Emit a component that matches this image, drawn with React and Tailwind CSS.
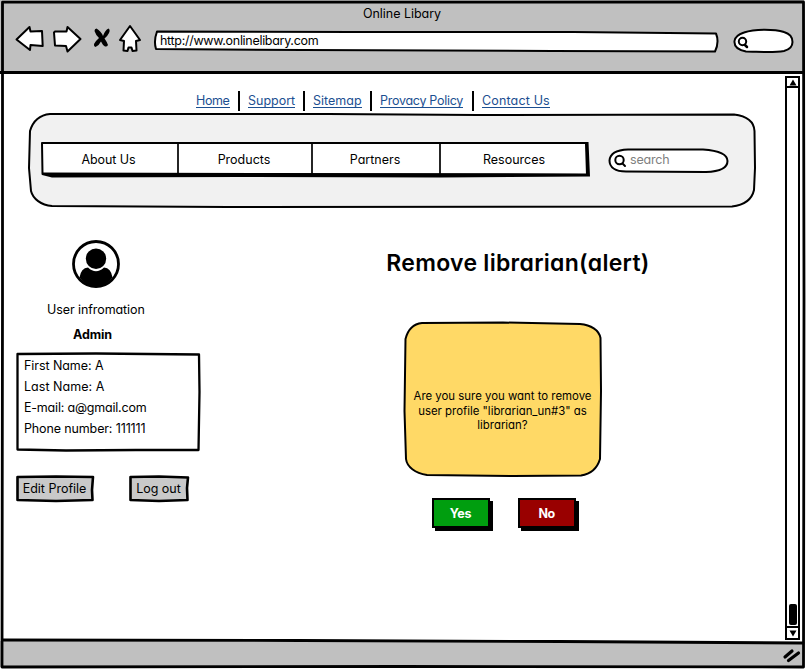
import React from "react";

/* Hand-drawn outline stretched behind the content of its box. */
function Sketch({ w, h, children }) {
  return (
    <svg
      className="pointer-events-none absolute top-0 left-0 overflow-visible"
      width={w}
      height={h}
      viewBox={`0 0 ${w} ${h}`}
      fill="none"
      stroke="#000"
      strokeWidth="2"
      strokeLinejoin="round"
      strokeLinecap="round"
      aria-hidden="true"
    >
      {children}
    </svg>
  );
}

function Toolbar() {
  return (
    <header className="mr-[2px] h-[74px] border-b-[3px] border-black bg-[#c0c0c0]">
      <div className="h-[24px] pt-[6px] pl-[363px] leading-[16px] tracking-[-0.04px]">
        Online Libary
      </div>
      <div className="flex h-[34px]">
        <svg className="ml-[14px] h-[30px] w-[130px] shrink-0" viewBox="14 22 130 30" fill="#fff" stroke="#000" strokeWidth="2" strokeLinejoin="round" strokeLinecap="round">
          <path d="M16.5 37.5 L29.5 25 L30.5 29.5 L42 29 L42.7 44 L30.5 43 L30 48 Z" />
          <path d="M54 30.5 L55 29.500 L66.5 29.5 L67.500 25 L80.5 37 L67.5 49.5 L66 44 L55 43.500 Z" />
          <path d="M96.500 26.500 Q101 29 103 34 Q105 28 108.500 26.500 Q110.500 28 109 31 Q107 35 104.500 36.500 Q107 40 108 43 Q107 45 105 44.500 Q102.500 43 101 39.500 Q99 43.500 95.500 45 Q93.500 44.500 94 42 Q96 38.500 99 36 Q95.500 32.500 94.500 29 Q94.500 26.500 96.500 26.500 Z" fill="#000" stroke="none" />
          <path d="M130 24 L140 38 L136 39 L136.5 48.5 L132.500 49 L131.5 45.500 L128.500 45.500 L127.5 49 L123.5 48.5 L124 39 L120 38 Z" />
        </svg>
        <div className="relative mt-[6px] ml-[9px] h-[23px] w-[567px] shrink-0">
          <Sketch w={567} h={23}>
            <path d="M4 1.5 L200 2 L420 2 L563 3.5 Q566.5 12 562 21.500 L400 21 L150 20 L3 19 Q0.5 11 4 1.5 Z" fill="#fff" />
          </Sketch>
          <span className="relative block pt-[3px] pl-[7px] leading-[16px] tracking-[-0.3px]">
            http://www.onlinelibary.com
          </span>
        </div>
        <svg className="mt-[3px] ml-[13px] h-[28px] w-[62px] shrink-0" viewBox="733 27 62 28" fill="none" stroke="#000" strokeWidth="2" strokeLinejoin="round" strokeLinecap="round">
          <path d="M744 32.5 C755 28.5 775 29 784 32 C791 34 792.500 38 792.500 42 C792.500 47 790 49.500 784 51 C772 53 757 51.500 746 51.500 C738 50 734 46 734.500 41 C735 37 738 34.500 744 32.500 Z" fill="#fff" />
          <circle cx="742.5" cy="41.500" r="3.7" />
          <path d="M745 45 L747 47" strokeWidth="2.5" />
        </svg>
      </div>
    </header>
  );
}

function Divider() {
  return <span className="mr-2 h-[20px] w-[2px] bg-black" />;
}

function Link({ className, children }) {
  return (
    <span className={className}>
      <a className="block h-[15px] w-fit border-b border-[#1c4f91] leading-[16px] text-[#1c4f91]">{children}</a>
    </span>
  );
}

function TopLinks() {
  return (
    <nav className="mt-[17px] ml-[192px] flex h-[22px] whitespace-nowrap">
      <Link className="w-[42px] pt-[2px] tracking-[-0.37px]">Home</Link>
      <Divider />
      <Link className="w-[55px] pt-[2px]">Support</Link>
      <Divider />
      <Link className="w-[57px] pt-[2px]">Sitemap</Link>
      <Divider />
      <Link className="w-[92px] pt-[2px] tracking-[-0.28px]">Provacy Policy</Link>
      <Divider />
      <Link className="pt-[2px] tracking-[0.16px]">Contact Us</Link>
    </nav>
  );
}

function MenuPanel() {
  return (
    <section className="relative ml-[24px] flex h-[95px] w-[728px]">
      <Sketch w={728} h={95}>
        <path
          d="M22 1 L300 1 L450 2 L706 1.5 C718 3 726 8 726.5 18 L727 55 L726 77 C724 86 717 92 704 93.5 L200 94 L24 93 C13 92 5 86 3 78 L1 55 L2 18 C5 8 11 2 22 1 Z"
          fill="#f1f1f1"
        />
      </Sketch>
      <div className="relative mt-[28px] ml-[12px] h-[38px] w-[551px]">
        <Sketch w={551} h={38}>
          <path d="M2 2 L546 2 L547 34 L2.500 33 Z" fill="#fff" />
          <path d="M2 31.500 L547 32.500 L545.500 1 L548.500 1 L550 35.500 L400 36.500 L200 36 L12 36.500 L2 34 Z" fill="#000" stroke="none" />
          <path d="M138 2 V33 M272 2 V33 M400 2 V33" strokeWidth="1.7" />
        </Sketch>
        <div className="relative flex h-[36px] items-center text-center leading-[16px]">
          <span className="w-[138px] pt-px pr-[1px] tracking-[-0.07px]">About Us</span>
          <span className="w-[134px] pt-px pr-[2px]">Products</span>
          <span className="w-[128px] pt-px pr-[2px]">Partners</span>
          <span className="w-[148px] pt-px">Resources</span>
        </div>
      </div>
      <div className="relative mt-[35px] ml-[17px] h-[26px] w-[121px]">
        <Sketch w={121} h={26}>
          <path d="M20 1.5 L95 1.5 C110 2.500 119.500 6 119.500 13 C119.500 20 112 23.500 98 24 L18 23.5 C7 23.500 1.500 19 1.500 12.500 C2 6 8 2 20 1.5 Z" fill="#fff" />
          <circle cx="11.5" cy="12" r="4.200" />
          <path d="M14.5 15.5 L17 18" />
        </Sketch>
        <span className="relative block pt-[4px] pl-[22px] leading-[16px] tracking-[-0.18px] text-[#808080]">
          search
        </span>
      </div>
    </section>
  );
}

function Profile() {
  return (
    <aside className="w-[200px] shrink-0">
      <svg className="mt-[32px] ml-[68px] h-[48px] w-[48px]" viewBox="0 0 48 48">
        <circle cx="24" cy="24" r="22.5" fill="#fff" stroke="#000" strokeWidth="2.8" />
        <circle cx="24" cy="18.8" r="10.2" />
        <path d="M7.5 37.5 Q9 28 16 27.5 Q24 35 32 27.5 Q39 28 40.5 37.5 Q34 46.5 24 46.5 Q14 46.5 7.5 37.5 Z" />
      </svg>
      <p className="mt-[14px] ml-[43px] leading-[16px] tracking-[-0.08px]">User infromation</p>
      <p className="mt-[9px] ml-[69px] leading-[16px] font-bold tracking-[-0.1px]">Admin</p>
      <div className="relative mt-[9px] ml-[12px] h-[99px] w-[185px]">
        <Sketch w={185} h={99}>
          <path d="M1.5 2 L80 1.5 L183 2.5 L183.5 40 L182.5 98 L120 98 L50 98.5 L1.5 97.5 Z" strokeWidth="2.300" />
        </Sketch>
        <div className="relative pt-[3px] pl-[8px] leading-[21px]">
          <p className="tracking-[-0.07px]">First Name: A</p>
          <p className="tracking-[0.03px]">Last Name: A</p>
          <p className="tracking-[-0.2px]">E-mail: a@gmail.com</p>
          <p className="tracking-[-0.13px]">Phone number: 111111</p>
        </div>
      </div>
      <div className="mt-[24px] ml-[12px] flex">
        <button className="relative h-[27px] w-[78px]">
          <Sketch w={78} h={27}>
            <path d="M1.500 2 L40 1.5 L77 2 L76 15 L76.5 25 L40 26 L1.500 25 Z" fill="#c9c9c9" strokeWidth="2.6" />
          </Sketch>
          <span className="relative block pr-[1px] leading-[16px]">Edit Profile</span>
        </button>
        <button className="relative ml-[35px] h-[27px] w-[60px]">
          <Sketch w={60} h={27}>
            <path d="M1.500 2 L30 1.5 L59 2.5 L58 13 L58.5 25 L30 26 L1.500 25 Z" fill="#c9c9c9" strokeWidth="2.6" />
          </Sketch>
          <span className="relative block pr-[1px] leading-[16px]">Log out</span>
        </button>
      </div>
    </aside>
  );
}

function Alert() {
  return (
    <section className="flex w-[628px] shrink-0 flex-col items-center">
      <h1 className="mt-[40px] text-[23px] leading-[30px] font-semibold tracking-[0.28px]">Remove librarian(alert)</h1>
      <div className="relative mt-[43px] mr-[31px] h-[157px] w-[200px]">
        <Sketch w={200} h={157}>
          <path
            d="M19 2 L100 1.5 L177 3 C188 4 196 9 197.5 17 L198 70 L197 138 C194 148 188 153 178 154.5 L110 155 L24 154 C12 152 4 146 3 138 L1.500 90 L2.500 18 C5 8 10 3 19 2 Z"
            fill="#ffd966"
          />
        </Sketch>
        <p className="relative pt-[68px] text-center text-[11.4px] leading-[14.5px] whitespace-nowrap">
          Are you sure you want to remove
          <br />
          user profile "librarian_un#3" as
          <br />
          librarian?
        </p>
      </div>
      <div className="mt-[20px] mr-[29px] flex gap-[28px] font-bold text-white">
        <button className="h-[30px] w-[58px] border-2 border-black bg-[#009e0f] pt-px leading-[16px] tracking-[-0.2px] shadow-[3px_3px_0_0_#000]">
          Yes
        </button>
        <button className="h-[30px] w-[58px] border-2 border-black bg-[#990000] pt-px leading-[16px] tracking-[-0.5px] shadow-[3px_3px_0_0_#000]">
          No
        </button>
      </div>
    </section>
  );
}

function Scrollbar() {
  return (
    <div className="mt-[2px] ml-px flex h-[564px] w-[15px] flex-col items-center border-2 border-black">
      <div className="flex h-[10px] w-full items-center justify-center border-b-2 border-black">
        <svg width="8" height="7" viewBox="0 0 8 7"><path d="M4 0.5 L7.5 6.5 L0.5 6.5 Z" /></svg>
      </div>
      <div className="mt-auto mb-[1px] h-[21px] w-[8px] rounded-[2px] bg-black" />
      <div className="flex h-[12px] w-full items-center justify-center border-t-2 border-black">
        <svg width="8" height="7" viewBox="0 0 8 7"><path d="M0.5 0.5 L7.5 0.5 L4 6.5 Z" /></svg>
      </div>
    </div>
  );
}

export default function App() {
  return (
    <div className="h-[669px] w-[806px] bg-white font-['Inter','Liberation_Sans',sans-serif] text-[12.5px] text-black [font-feature-settings:'cv11']">
      <div className="relative flex h-[669px] w-[806px] flex-col overflow-hidden">
        <Toolbar />
        <main className="flex h-[567px] shrink-0 pl-[4px]">
          <div className="w-[780px] shrink-0">
            <TopLinks />
            <MenuPanel />
            <div className="flex">
              <Profile />
              <Alert />
            </div>
          </div>
          <Scrollbar />
        </main>
        <footer className="relative mr-[2px] h-[26px] bg-[#c0c0c0]">
          <Sketch w={804} h={26}>
            <path d="M300 0 L560 0.5 L803 2 L803 0 Z" fill="#fff" stroke="none" />
            <path d="M3 -1 L300 -0.5 L560 0.5 L803 2" strokeWidth="2.8" />
            <path d="M785 16 L792 10 M788.5 19.5 L798.5 12" strokeWidth="3.2" />
          </Sketch>
        </footer>
        <Sketch w={806} h={669}>
          <path d="M2.5 2.2 L803.5 2 L804 300 L803.5 667 L400 666.5 L2 667 L2.5 300 Z" strokeWidth="2.8" />
        </Sketch>
      </div>
    </div>
  );
}
